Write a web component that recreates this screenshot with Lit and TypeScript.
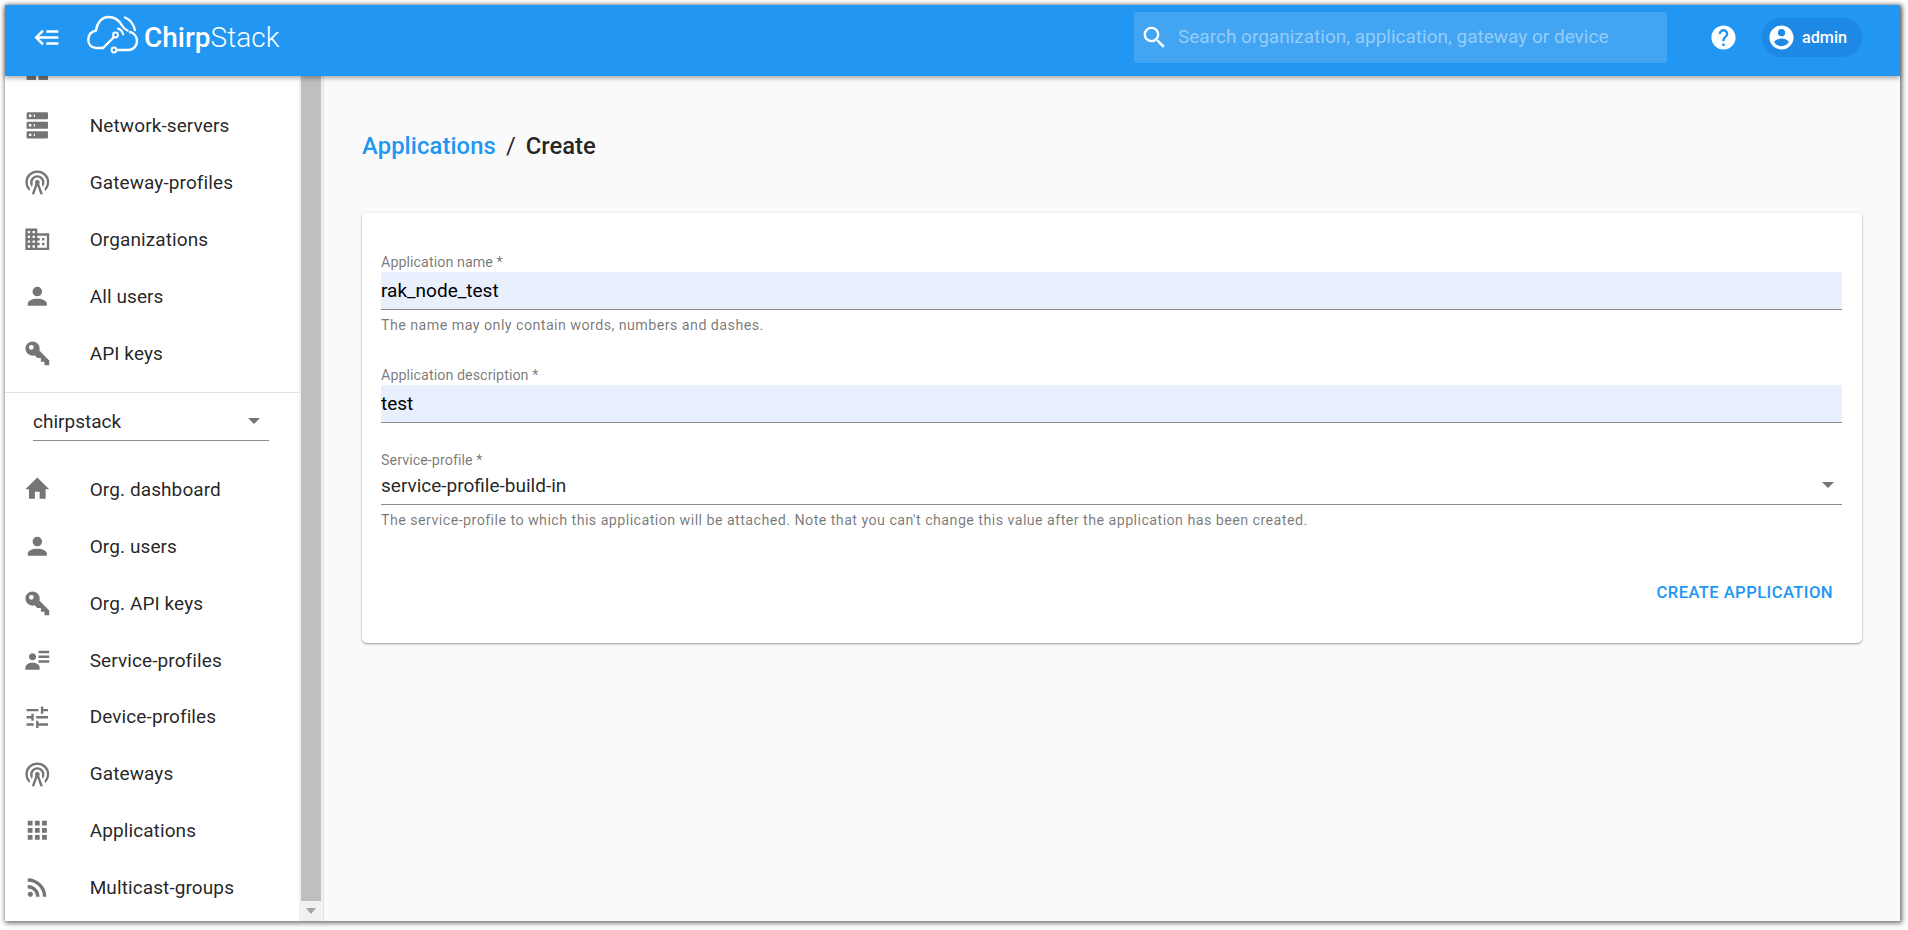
import { LitElement, html, css, svg } from "lit";
import { customElement } from "lit/decorators.js";

const P = {
  dashboard: "M13,3V9H21V3M13,21H21V11H13M3,21H11V15H3M3,13H11V3H3V13Z",
  server: "M4,1H20A1,1 0 0,1 21,2V6A1,1 0 0,1 20,7H4A1,1 0 0,1 3,6V2A1,1 0 0,1 4,1M4,9H20A1,1 0 0,1 21,10V14A1,1 0 0,1 20,15H4A1,1 0 0,1 3,14V10A1,1 0 0,1 4,9M4,17H20A1,1 0 0,1 21,18V22A1,1 0 0,1 20,23H4A1,1 0 0,1 3,22V18A1,1 0 0,1 4,17M9,5H10V3H9V5M9,13H10V11H9V13M9,21H10V19H9V21M5,3V5H7V3H5M5,11V13H7V11H5M5,19V21H7V19H5Z",
  tower: "M12,10A2,2 0 0,1 14,12C14,12.5 13.82,12.94 13.53,13.29L16.7,22H14.57L12,14.93L9.43,22H7.3L10.47,13.29C10.18,12.94 10,12.5 10,12A2,2 0 0,1 12,10M12,8A4,4 0 0,0 8,12C8,12.5 8.1,13 8.28,13.46L7.4,15.86C6.53,14.81 6,13.47 6,12A6,6 0 0,1 12,6A6,6 0 0,1 18,12C18,13.47 17.47,14.81 16.6,15.86L15.72,13.46C15.9,13 16,12.5 16,12A4,4 0 0,0 12,8M12,4A8,8 0 0,0 4,12C4,14 4.73,15.82 5.95,17.21L5.23,19.2C3.24,17.37 2,14.83 2,12A10,10 0 0,1 12,2A10,10 0 0,1 22,12C22,14.83 20.76,17.37 18.77,19.2L18.05,17.21C19.27,15.82 20,14 20,12A8,8 0 0,0 12,4Z",
  domain: "M18,15H16V17H18M18,11H16V13H18M20,19H12V17H14V15H12V13H14V11H12V9H20M10,7H8V5H10M10,11H8V9H10M10,15H8V13H10M10,19H8V17H10M6,7H4V5H6M6,11H4V9H6M6,15H4V13H6M6,19H4V17H6M12,7V3H2V21H22V7H12Z",
  account: "M12,4A4,4 0 0,1 16,8A4,4 0 0,1 12,12A4,4 0 0,1 8,8A4,4 0 0,1 12,4M12,14C16.42,14 20,15.79 20,18V20H4V18C4,15.79 7.58,14 12,14Z",
  key: "M22,18V22H18V19H15V16H12L9.74,13.74C9.19,13.91 8.61,14 8,14A6,6 0 0,1 2,8A6,6 0 0,1 8,2A6,6 0 0,1 14,8C14,8.61 13.91,9.19 13.74,9.74L22,18M7,5A2,2 0 0,0 5,7A2,2 0 0,0 7,9A2,2 0 0,0 9,7A2,2 0 0,0 7,5Z",
  home: "M10,20V14H14V20H19V12H22L12,2L2,12H5V20H10Z",
  details: "M11,9C11,10.66 9.66,12 8,12C6.34,12 5,10.66 5,9C5,7.34 6.34,6 8,6C9.66,6 11,7.34 11,9M14,20H2V18C2,15.79 4.69,14 8,14C11.31,14 14,15.79 14,18M22,12V14H13V12M22,8V10H13V8M22,4V6H13V4Z",
  tune: "M3,17V19H9V17H3M3,5V7H13V5H3M13,21V19H21V17H13V15H11V21H13M7,9V11H3V13H7V15H9V9H7M21,13V11H11V13H21M15,9H17V7H21V5H17V3H15V9Z",
  apps: "M16,20H20V16H16M16,14H20V10H16M10,8H14V4H10M16,8H20V4H16M10,14H14V10H10M4,14H8V10H4M4,20H8V16H4M10,20H14V16H10M4,8H8V4H4V8Z",
  rss: "M6.18,15.64A2.18,2.18 0 0,1 8.36,17.82C8.36,19 7.38,20 6.18,20C5,20 4,19 4,17.82A2.18,2.18 0 0,1 6.18,15.64M4,4.44A15.56,15.56 0 0,1 19.56,20H16.73A12.73,12.73 0 0,0 4,7.27V4.44M4,10.1A9.9,9.9 0 0,1 13.9,20H11.07A7.07,7.07 0 0,0 4,12.93V10.1Z",
  back: "M5,13L9,17L7.6,18.42L1.18,12L7.6,5.58L9,7L5,11H21V13H5M21,6V8H11V6H21M21,16V18H11V16H21Z",
  search: "M9.5,3A6.5,6.5 0 0,1 16,9.5C16,11.11 15.41,12.59 14.44,13.73L14.71,14H15.5L20.5,19L19,20.5L14,15.5V14.71L13.73,14.44C12.59,15.41 11.11,16 9.5,16A6.5,6.5 0 0,1 3,9.5A6.5,6.5 0 0,1 9.5,3M9.5,5C7,5 5,7 5,9.5C5,12 7,14 9.5,14C12,14 14,12 14,9.5C14,7 12,5 9.5,5Z",
  help: "M15.07,11.25L14.17,12.17C13.45,12.89 13,13.5 13,15H11V14.5C11,13.39 11.45,12.39 12.17,11.67L13.41,10.41C13.78,10.05 14,9.55 14,9C14,7.89 13.1,7 12,7A2,2 0 0,0 10,9H8A4,4 0 0,1 12,5A4,4 0 0,1 16,9C16,9.88 15.64,10.67 15.07,11.25M13,19H11V17H13M12,2A10,10 0 0,0 2,12A10,10 0 0,0 12,22A10,10 0 0,0 22,12C22,6.47 17.5,2 12,2Z",
  user: "M12,19.2C9.5,19.2 7.29,17.92 6,16C6.03,14 10,12.9 12,12.9C14,12.9 17.97,14 18,16C16.71,17.92 14.5,19.2 12,19.2M12,5A3,3 0 0,1 15,8A3,3 0 0,1 12,11A3,3 0 0,1 9,8A3,3 0 0,1 12,5M12,2A10,10 0 0,0 2,12A10,10 0 0,0 12,22A10,10 0 0,0 22,12C22,6.47 17.5,2 12,2Z",
};

const icon = (d: string, cls = "icon") =>
  html`<svg class=${cls} viewBox="0 0 24 24" fill="currentColor">${svg`<path d=${d}></path>`}</svg>`;

const topItems: [string, string][] = [
  ["", P.dashboard],
  ["Network-servers", P.server],
  ["Gateway-profiles", P.tower],
  ["Organizations", P.domain],
  ["All users", P.account],
  ["API keys", P.key],
];
const orgItems: [string, string][] = [
  ["Org. dashboard", P.home],
  ["Org. users", P.account],
  ["Org. API keys", P.key],
  ["Service-profiles", P.details],
  ["Device-profiles", P.tune],
  ["Gateways", P.tower],
  ["Applications", P.apps],
  ["Multicast-groups", P.rss],
];

@customElement("app-root")
export class AppRoot extends LitElement {
  static styles = css`
    :host {
      display: block;
      box-sizing: border-box;
      width: 1908px;
      height: 930px;
      padding: 5px 8px 9px 5px;
      background: #fff;
      font-family: Roboto, "Liberation Sans", sans-serif;
      color: rgba(0, 0, 0, 0.87);
      overflow: hidden;
    }
    .window {
      display: flex;
      flex-direction: column;
      height: 100%;
      background: #fafafa;
      box-shadow: 1px 1px 5px 1px rgba(0, 0, 0, 0.6);
    }
    .header {
      position: relative;
      z-index: 2;
      flex: none;
      height: 71px;
      box-sizing: border-box;
      padding-bottom: 6px;
      display: flex;
      align-items: center;
      background: #2196f3;
      color: #fff;
      box-shadow: 0 2px 5px rgba(0, 0, 0, 0.35);
    }
    .menu {
      width: 29px;
      height: 29px;
      margin-left: 28px;
      flex: none;
    }
    .logo {
      display: flex;
      align-items: center;
      margin-left: 25px;
      width: 191px;
      flex: none;
    }
    .logo svg {
      width: 52px;
      height: 42px;
      flex: none;
      margin-top: -3px;
    }
    .logotext {
      margin-left: 5px;
      font-size: 28px;
      line-height: 40px;
      font-weight: 300;
      white-space: nowrap;
    }
    .logotext b {
      font-weight: 500;
    }
    .search {
      margin-left: 856px;
      width: 533px;
      height: 51px;
      flex: none;
      border-radius: 3px;
      background: rgba(255, 255, 255, 0.15);
      display: flex;
      align-items: center;
      box-sizing: border-box;
      padding-left: 6px;
    }
    .search .icon {
      width: 29px;
      height: 29px;
      color: #fff;
      flex: none;
    }
    .placeholder {
      margin: 0 0 2px 9px;
      font-size: 19px;
      color: rgba(255, 255, 255, 0.45);
      white-space: nowrap;
    }
    .help {
      margin-left: 42px;
      width: 29px;
      height: 29px;
      flex: none;
    }
    .user {
      margin-left: 24px;
      width: 100px;
      height: 39px;
      border-radius: 20px;
      background: #1e88e5;
      display: flex;
      align-items: center;
      box-sizing: border-box;
      padding-left: 5px;
      flex: none;
    }
    .user .icon {
      width: 29px;
      height: 29px;
      flex: none;
    }
    .user span {
      margin-left: 6px;
      font-size: 16.2px;
      font-weight: 500;
    }
    .body {
      flex: 1;
      min-height: 0;
      display: flex;
    }
    .sidebar {
      flex: none;
      width: 294px;
      background: #fff;
      overflow: hidden;
    }
    .sidelist {
      margin-top: -35.6px;
    }
    .row {
      height: 56.9px;
      display: flex;
      align-items: center;
      padding-left: 17.7px;
      font-size: 19px;
      letter-spacing: 0.1px;
      white-space: nowrap;
    }
    .row .icon {
      width: 28.6px;
      height: 28.6px;
      color: #757575;
      flex: none;
      margin-right: 38.4px;
    }
    .divider {
      height: 1px;
      background: #e0e0e0;
      margin-top: 10.2px;
    }
    .orgselect {
      margin: 10px 30px 20px 28px;
      height: 38px;
      box-sizing: border-box;
      border-bottom: 1px solid #8c8c8c;
      display: flex;
      align-items: center;
      justify-content: space-between;
      font-size: 19px;
      padding-right: 9px;
    }
    .caret {
      width: 0;
      height: 0;
      border-left: 6px solid transparent;
      border-right: 6px solid transparent;
      border-top: 6px solid #757575;
    }
    .scrollbar {
      flex: none;
      width: 25px;
      box-sizing: border-box;
      background: #f1f1f1;
      border-right: 1px solid #e4e4e4;
      display: flex;
      flex-direction: column;
    }
    .thumb {
      flex: 1;
      margin: 0 2px;
      background: #bfbfbf;
    }
    .arrow {
      flex: none;
      height: 20px;
      display: flex;
      align-items: center;
      justify-content: center;
    }
    .arrow i {
      width: 0;
      height: 0;
      border-left: 5px solid transparent;
      border-right: 5px solid transparent;
      border-top: 6px solid #a3a3a3;
    }
    .main {
      flex: 1;
      min-width: 0;
      padding: 0 38px 0 38px;
    }
    .crumbs {
      display: flex;
      align-items: center;
      height: 28px;
      margin-top: 56px;
      font-size: 23.8px;
      font-weight: 500;
      white-space: nowrap;
    }
    .crumbs a {
      color: #2196f3;
      letter-spacing: 0.1px;
    }
    .crumbs .sep {
      margin: 0 10px;
      font-weight: 400;
    }
    .card {
      margin-top: 53px;
      height: 430px;
      box-sizing: border-box;
      background: #fff;
      border-radius: 5px;
      box-shadow: 0 1px 3px rgba(0, 0, 0, 0.3), 0 1px 1px rgba(0, 0, 0, 0.12);
      padding: 40px 20px 0 19px;
      display: flex;
      flex-direction: column;
    }
    .label {
      font-size: 14.3px;
      letter-spacing: 0.05px;
      line-height: 19px;
      height: 19px;
      color: rgba(0, 0, 0, 0.54);
    }
    .input {
      height: 38px;
      box-sizing: border-box;
      border-bottom: 1px solid #8a8a8a;
      font-size: 19px;
      display: flex;
      align-items: center;
      justify-content: space-between;
      color: rgba(0, 0, 0, 0.87);
    }
    .input.filled {
      background: #e8f0fe;
      color: #000;
    }
    .input.select {
      height: 36px;
      padding-bottom: 3px;
    }
    .input .caret {
      margin-right: 8px;
    }
    .hint {
      font-size: 14.3px;
      line-height: 18px;
      margin-top: 6px;
      color: rgba(0, 0, 0, 0.54);
      letter-spacing: 0.43px;
      white-space: nowrap;
    }
    .f2 {
      margin-top: 32px;
    }
    .f3 {
      margin-top: 28px;
      height: 18px;
      line-height: 18px;
    }
    .actions {
      margin-top: 54px;
      display: flex;
      justify-content: flex-end;
      padding-right: 9px;
    }
    .btn {
      color: #2196f3;
      font-size: 16.6px;
      font-weight: 500;
      letter-spacing: 0.42px;
      line-height: 20px;
      white-space: nowrap;
    }
  `;

  private logo() {
    return html`<svg viewBox="0 0 52 42" fill="none" stroke="#fff" stroke-width="2.4" stroke-linecap="round" stroke-linejoin="round">
      ${svg`
        <path d="M16 33 H9 C4 33 1.3 29 1.3 25 C1.3 20 4.5 16.5 9 15.5 C10 7.5 15 2 21.5 2 C27 2 32 5 35 10.5 C36.5 13 38 14.5 40.5 15.5"></path>
        <path d="M16 33 L26.5 22.5"></path>
        <circle cx="28.5" cy="20" r="2.4" stroke-width="2"></circle>
        <circle cx="27" cy="35" r="2.4" stroke-width="2"></circle>
        <path d="M29.5 35 H41 C46.5 35 50 31 50 26 C50 21.5 47 18 43 17"></path>
        <path d="M31 13.5 C33.5 14.5 35.5 16.5 36.2 19.5" stroke-width="2"></path>
        <path d="M38 2.5 C43 4.5 46.5 9 48 15" stroke-width="2.4"></path>
      `}
    </svg>`;
  }

  render() {
    return html`
      <div class="window">
        <header class="header">
          ${icon(P.back, "menu")}
          <div class="logo">
            ${this.logo()}
            <span class="logotext"><b>Chirp</b>Stack</span>
          </div>
          <div class="search">
            ${icon(P.search)}
            <span class="placeholder">Search organization, application, gateway or device</span>
          </div>
          ${icon(P.help, "help")}
          <div class="user">${icon(P.user)}<span>admin</span></div>
        </header>
        <div class="body">
          <nav class="sidebar">
            <div class="sidelist">
              ${topItems.map(([t, d]) => html`<div class="row">${icon(d)}<span>${t}</span></div>`)}
              <div class="divider"></div>
              <div class="orgselect"><span>chirpstack</span><i class="caret"></i></div>
              ${orgItems.map(([t, d]) => html`<div class="row">${icon(d)}<span>${t}</span></div>`)}
            </div>
          </nav>
          <div class="scrollbar">
            <div class="thumb"></div>
            <div class="arrow"><i></i></div>
          </div>
          <main class="main">
            <div class="crumbs">
              <a>Applications</a><span class="sep">/</span><span>Create</span>
            </div>
            <section class="card">
              <div class="label">Application name *</div>
              <div class="input filled">rak_node_test</div>
              <div class="hint">The name may only contain words, numbers and dashes.</div>
              <div class="label f2">Application description *</div>
              <div class="input filled">test</div>
              <div class="label f3">Service-profile *</div>
              <div class="input select"><span>service-profile-build-in</span><i class="caret"></i></div>
              <div class="hint">The service-profile to which this application will be attached. Note that you can't change this value after the application has been created.</div>
              <div class="actions"><span class="btn">CREATE APPLICATION</span></div>
            </section>
          </main>
        </div>
      </div>
    `;
  }
}
